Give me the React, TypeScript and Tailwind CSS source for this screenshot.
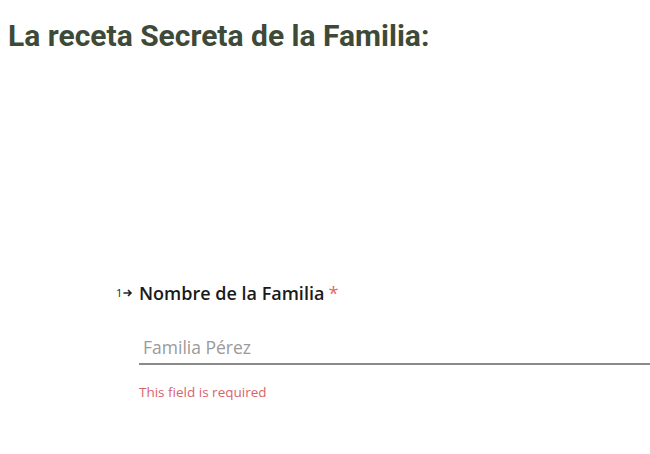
import * as React from "react";

export default function App() {
  const [name, setName] = React.useState("");

  return (
    <div className="h-[454px] w-[650px] overflow-hidden bg-white">
      <h1 className="pl-[8px] pt-[18px] font-['Roboto',sans-serif] text-[30px] font-bold leading-[36px] text-[#3e4a37]">
        La receta Secreta de la Familia:
      </h1>

      <div className="mt-[228px] pl-[116px] font-['Open_Sans','Noto_Sans',sans-serif]">
        <div className="flex items-center">
          <span className="flex w-[23px] items-center text-[11px] text-[#222]">
            1
            <svg width="10" height="8" viewBox="0 0 10 8" className="ml-[1px]">
              <path d="M0.5 4h7M5 1l3 3-3 3" fill="none" stroke="#222" strokeWidth="1.6" />
            </svg>
          </span>
          <span className="text-[18px] font-semibold leading-[22px] text-[#1a1a1a]">
            Nombre de la Familia
            <span className="ml-[4px] font-normal text-[#e06a6a]">*</span>
          </span>
        </div>

        <div className="ml-[23px] mt-[31px]">
          <input
            value={name}
            onChange={(e) => setName(e.target.value)}
            placeholder="Familia Pérez"
            className="block h-[30px] w-full border-b-2 border-[#8a8a8a] bg-transparent px-[4px] pb-[4px] text-[17.5px] text-[#333] outline-none placeholder:text-[#9a9a9a]"
          />
          <div className="mt-[18px] text-[13.5px] leading-[18px] text-[#d9636b]">
            This field is required
          </div>
        </div>
      </div>
    </div>
  );
}
